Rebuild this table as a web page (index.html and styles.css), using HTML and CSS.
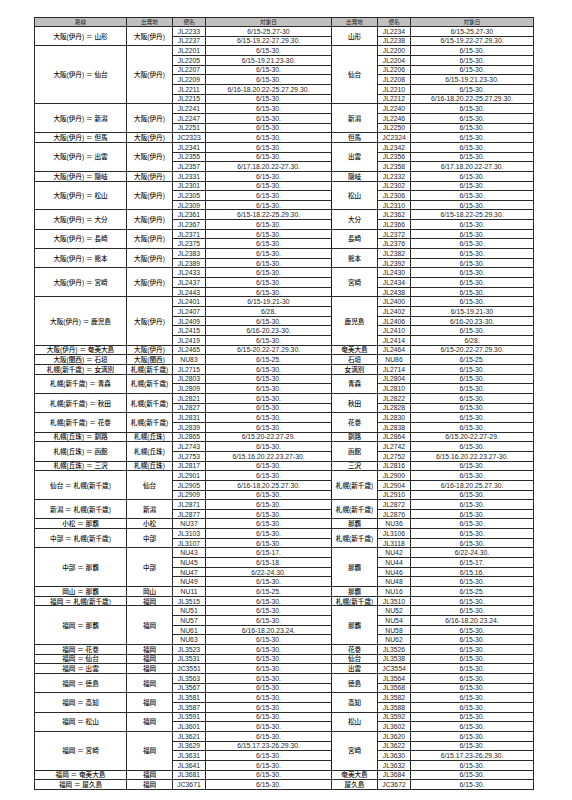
FILE: index.html
```html
<!DOCTYPE html>
<html lang="ja">
<head>
<meta charset="utf-8">
<link rel="stylesheet" href="styles.css">
</head>
<body>
<table class="sched">
<colgroup>
<col class="c-route"><col class="c-dep"><col class="c-fl"><col class="c-days">
<col class="c-dep"><col class="c-fl"><col class="c-days2">
</colgroup>
<thead>
<tr class="head"><th>路線</th><th>出発地</th><th>便名</th><th>対象日</th><th class="split">出発地</th><th>便名</th><th>対象日</th></tr>
</thead>
<tbody>
<tr><td class="jp" rowspan="2">大阪(伊丹) ＝ 山形</td><td class="jp" rowspan="2">大阪(伊丹)</td><td>JL2233</td><td>6/15-25.27-30</td><td class="jp split" rowspan="2">山形</td><td>JL2234</td><td>6/15-25.27-30</td></tr>
<tr><td>JL2237</td><td>6/15-19.22-27.29.30.</td><td>JL2238</td><td>6/15-19.22-27.29.30.</td></tr>
<tr><td class="jp" rowspan="6">大阪(伊丹) ＝ 仙台</td><td class="jp" rowspan="6">大阪(伊丹)</td><td>JL2201</td><td>6/15-30.</td><td class="jp split" rowspan="6">仙台</td><td>JL2200</td><td>6/15-30.</td></tr>
<tr><td>JL2205</td><td>6/15-19.21.23-30.</td><td>JL2204</td><td>6/15-30.</td></tr>
<tr><td>JL2207</td><td>6/15-30.</td><td>JL2206</td><td>6/15-30.</td></tr>
<tr><td>JL2209</td><td>6/15-30.</td><td>JL2208</td><td>6/15-19.21.23-30.</td></tr>
<tr><td>JL2211</td><td>6/16-18.20.22-25.27.29.30.</td><td>JL2210</td><td>6/15-30.</td></tr>
<tr><td>JL2215</td><td>6/15-30.</td><td>JL2212</td><td>6/16-18.20.22-25.27.29.30.</td></tr>
<tr><td class="jp" rowspan="3">大阪(伊丹) ＝ 新潟</td><td class="jp" rowspan="3">大阪(伊丹)</td><td>JL2241</td><td>6/15-30.</td><td class="jp split" rowspan="3">新潟</td><td>JL2240</td><td>6/15-30.</td></tr>
<tr><td>JL2247</td><td>6/15-30.</td><td>JL2246</td><td>6/15-30.</td></tr>
<tr><td>JL2251</td><td>6/15-30.</td><td>JL2250</td><td>6/15-30.</td></tr>
<tr><td class="jp">大阪(伊丹) ＝ 但馬</td><td class="jp">大阪(伊丹)</td><td>JC2323</td><td>6/15-30.</td><td class="jp split">但馬</td><td>JC2324</td><td>6/15-30.</td></tr>
<tr><td class="jp" rowspan="3">大阪(伊丹) ＝ 出雲</td><td class="jp" rowspan="3">大阪(伊丹)</td><td>JL2341</td><td>6/15-30.</td><td class="jp split" rowspan="3">出雲</td><td>JL2342</td><td>6/15-30.</td></tr>
<tr><td>JL2355</td><td>6/15-30.</td><td>JL2356</td><td>6/15-30.</td></tr>
<tr><td>JL2357</td><td>6/17.18.20.22-27.30.</td><td>JL2358</td><td>6/17.18.20.22-27.30.</td></tr>
<tr><td class="jp">大阪(伊丹) ＝ 隠岐</td><td class="jp">大阪(伊丹)</td><td>JL2331</td><td>6/15-30.</td><td class="jp split">隠岐</td><td>JL2332</td><td>6/15-30.</td></tr>
<tr><td class="jp" rowspan="3">大阪(伊丹) ＝ 松山</td><td class="jp" rowspan="3">大阪(伊丹)</td><td>JL2301</td><td>6/15-30.</td><td class="jp split" rowspan="3">松山</td><td>JL2302</td><td>6/15-30.</td></tr>
<tr><td>JL2305</td><td>6/15-30.</td><td>JL2306</td><td>6/15-30.</td></tr>
<tr><td>JL2309</td><td>6/15-30.</td><td>JL2310</td><td>6/15-30.</td></tr>
<tr><td class="jp" rowspan="2">大阪(伊丹) ＝ 大分</td><td class="jp" rowspan="2">大阪(伊丹)</td><td>JL2361</td><td>6/15-18.22-25.29.30.</td><td class="jp split" rowspan="2">大分</td><td>JL2362</td><td>6/15-18.22-25.29.30.</td></tr>
<tr><td>JL2367</td><td>6/15-30.</td><td>JL2366</td><td>6/15-30.</td></tr>
<tr><td class="jp" rowspan="2">大阪(伊丹) ＝ 長崎</td><td class="jp" rowspan="2">大阪(伊丹)</td><td>JL2371</td><td>6/15-30.</td><td class="jp split" rowspan="2">長崎</td><td>JL2372</td><td>6/15-30.</td></tr>
<tr><td>JL2375</td><td>6/15-30.</td><td>JL2376</td><td>6/15-30.</td></tr>
<tr><td class="jp" rowspan="2">大阪(伊丹) ＝ 熊本</td><td class="jp" rowspan="2">大阪(伊丹)</td><td>JL2383</td><td>6/15-30.</td><td class="jp split" rowspan="2">熊本</td><td>JL2382</td><td>6/15-30.</td></tr>
<tr><td>JL2389</td><td>6/15-30.</td><td>JL2392</td><td>6/15-30.</td></tr>
<tr><td class="jp" rowspan="3">大阪(伊丹) ＝ 宮崎</td><td class="jp" rowspan="3">大阪(伊丹)</td><td>JL2433</td><td>6/15-30.</td><td class="jp split" rowspan="3">宮崎</td><td>JL2430</td><td>6/15-30.</td></tr>
<tr><td>JL2437</td><td>6/15-30.</td><td>JL2434</td><td>6/15-30.</td></tr>
<tr><td>JL2443</td><td>6/15-30.</td><td>JL2438</td><td>6/15-30.</td></tr>
<tr><td class="jp" rowspan="5">大阪(伊丹) ＝ 鹿児島</td><td class="jp" rowspan="5">大阪(伊丹)</td><td>JL2401</td><td>6/15-19.21-30</td><td class="jp split" rowspan="5">鹿児島</td><td>JL2400</td><td>6/15-30.</td></tr>
<tr><td>JL2407</td><td>6/28.</td><td>JL2402</td><td>6/15-19.21-30</td></tr>
<tr><td>JL2409</td><td>6/15-30.</td><td>JL2406</td><td>6/16-20.23-30.</td></tr>
<tr><td>JL2415</td><td>6/16-20.23-30.</td><td>JL2410</td><td>6/15-30.</td></tr>
<tr><td>JL2419</td><td>6/15-30.</td><td>JL2414</td><td>6/28.</td></tr>
<tr><td class="jp">大阪(伊丹) ＝ 奄美大島</td><td class="jp">大阪(伊丹)</td><td>JL2465</td><td>6/15-20.22-27.29.30.</td><td class="jp split">奄美大島</td><td>JL2464</td><td>6/15-20.22-27.29.30.</td></tr>
<tr><td class="jp">大阪(関西) ＝ 石垣</td><td class="jp">大阪(関西)</td><td>NU83</td><td>6/15-25.</td><td class="jp split">石垣</td><td>NU86</td><td>6/15-25.</td></tr>
<tr><td class="jp">札幌(新千歳) ＝ 女満別</td><td class="jp">札幌(新千歳)</td><td>JL2715</td><td>6/15-30.</td><td class="jp split">女満別</td><td>JL2714</td><td>6/15-30.</td></tr>
<tr><td class="jp" rowspan="2">札幌(新千歳) ＝ 青森</td><td class="jp" rowspan="2">札幌(新千歳)</td><td>JL2803</td><td>6/15-30.</td><td class="jp split" rowspan="2">青森</td><td>JL2804</td><td>6/15-30.</td></tr>
<tr><td>JL2809</td><td>6/15-30.</td><td>JL2810</td><td>6/15-30.</td></tr>
<tr><td class="jp" rowspan="2">札幌(新千歳) ＝ 秋田</td><td class="jp" rowspan="2">札幌(新千歳)</td><td>JL2821</td><td>6/15-30.</td><td class="jp split" rowspan="2">秋田</td><td>JL2822</td><td>6/15-30.</td></tr>
<tr><td>JL2827</td><td>6/15-30.</td><td>JL2828</td><td>6/15-30.</td></tr>
<tr><td class="jp" rowspan="2">札幌(新千歳) ＝ 花巻</td><td class="jp" rowspan="2">札幌(新千歳)</td><td>JL2831</td><td>6/15-30.</td><td class="jp split" rowspan="2">花巻</td><td>JL2830</td><td>6/15-30.</td></tr>
<tr><td>JL2839</td><td>6/15-30.</td><td>JL2838</td><td>6/15-30.</td></tr>
<tr><td class="jp">札幌(丘珠) ＝ 釧路</td><td class="jp">札幌(丘珠)</td><td>JL2865</td><td>6/15.20-22.27-29.</td><td class="jp split">釧路</td><td>JL2864</td><td>6/15.20-22.27-29.</td></tr>
<tr><td class="jp" rowspan="2">札幌(丘珠) ＝ 函館</td><td class="jp" rowspan="2">札幌(丘珠)</td><td>JL2743</td><td>6/15-30.</td><td class="jp split" rowspan="2">函館</td><td>JL2742</td><td>6/15-30.</td></tr>
<tr><td>JL2753</td><td>6/15.16.20.22.23.27-30.</td><td>JL2752</td><td>6/15.16.20.22.23.27-30.</td></tr>
<tr><td class="jp">札幌(丘珠) ＝ 三沢</td><td class="jp">札幌(丘珠)</td><td>JL2817</td><td>6/15-30.</td><td class="jp split">三沢</td><td>JL2816</td><td>6/15-30.</td></tr>
<tr><td class="jp" rowspan="3">仙台 ＝ 札幌(新千歳)</td><td class="jp" rowspan="3">仙台</td><td>JL2901</td><td>6/15-30.</td><td class="jp split" rowspan="3">札幌(新千歳)</td><td>JL2900</td><td>6/15-30.</td></tr>
<tr><td>JL2905</td><td>6/16-18.20.25.27.30.</td><td>JL2904</td><td>6/16-18.20.25.27.30.</td></tr>
<tr><td>JL2909</td><td>6/15-30.</td><td>JL2910</td><td>6/15-30.</td></tr>
<tr><td class="jp" rowspan="2">新潟 ＝ 札幌(新千歳)</td><td class="jp" rowspan="2">新潟</td><td>JL2871</td><td>6/15-30.</td><td class="jp split" rowspan="2">札幌(新千歳)</td><td>JL2872</td><td>6/15-30.</td></tr>
<tr><td>JL2877</td><td>6/15-30.</td><td>JL2876</td><td>6/15-30.</td></tr>
<tr><td class="jp">小松 ＝ 那覇</td><td class="jp">小松</td><td>NU37</td><td>6/15-30.</td><td class="jp split">那覇</td><td>NU36</td><td>6/15-30.</td></tr>
<tr><td class="jp" rowspan="2">中部 ＝ 札幌(新千歳)</td><td class="jp" rowspan="2">中部</td><td>JL3103</td><td>6/15-30.</td><td class="jp split" rowspan="2">札幌(新千歳)</td><td>JL3106</td><td>6/15-30.</td></tr>
<tr><td>JL3107</td><td>6/15-30.</td><td>JL3118</td><td>6/15-30.</td></tr>
<tr><td class="jp" rowspan="4">中部 ＝ 那覇</td><td class="jp" rowspan="4">中部</td><td>NU43</td><td>6/15-17.</td><td class="jp split" rowspan="4">那覇</td><td>NU42</td><td>6/22-24.30.</td></tr>
<tr><td>NU45</td><td>6/15-18.</td><td>NU44</td><td>6/15-17.</td></tr>
<tr><td>NU47</td><td>6/22-24.30.</td><td>NU46</td><td>6/15.16.</td></tr>
<tr><td>NU49</td><td>6/15-30.</td><td>NU48</td><td>6/15-30.</td></tr>
<tr><td class="jp">岡山 ＝ 那覇</td><td class="jp">岡山</td><td>NU11</td><td>6/15-25.</td><td class="jp split">那覇</td><td>NU16</td><td>6/15-25.</td></tr>
<tr><td class="jp">福岡 ＝ 札幌(新千歳)</td><td class="jp">福岡</td><td>JL3515</td><td>6/15-30.</td><td class="jp split">札幌(新千歳)</td><td>JL3510</td><td>6/15-30.</td></tr>
<tr><td class="jp" rowspan="4">福岡 ＝ 那覇</td><td class="jp" rowspan="4">福岡</td><td>NU51</td><td>6/15-30.</td><td class="jp split" rowspan="4">那覇</td><td>NU52</td><td>6/15-30.</td></tr>
<tr><td>NU57</td><td>6/15-30.</td><td>NU54</td><td>6/16-18.20.23.24.</td></tr>
<tr><td>NU61</td><td>6/16-18.20.23.24.</td><td>NU58</td><td>6/15-30.</td></tr>
<tr><td>NU63</td><td>6/15-30.</td><td>NU62</td><td>6/15-30.</td></tr>
<tr><td class="jp">福岡 ＝ 花巻</td><td class="jp">福岡</td><td>JL3523</td><td>6/15-30.</td><td class="jp split">花巻</td><td>JL3526</td><td>6/15-30.</td></tr>
<tr><td class="jp">福岡 ＝ 仙台</td><td class="jp">福岡</td><td>JL3531</td><td>6/15-30.</td><td class="jp split">仙台</td><td>JL3538</td><td>6/15-30.</td></tr>
<tr><td class="jp">福岡 ＝ 出雲</td><td class="jp">福岡</td><td>JC3551</td><td>6/15-30.</td><td class="jp split">出雲</td><td>JC3554</td><td>6/15-30.</td></tr>
<tr><td class="jp" rowspan="2">福岡 ＝ 徳島</td><td class="jp" rowspan="2">福岡</td><td>JL3563</td><td>6/15-30.</td><td class="jp split" rowspan="2">徳島</td><td>JL3564</td><td>6/15-30.</td></tr>
<tr><td>JL3567</td><td>6/15-30.</td><td>JL3568</td><td>6/15-30.</td></tr>
<tr><td class="jp" rowspan="2">福岡 ＝ 高知</td><td class="jp" rowspan="2">福岡</td><td>JL3581</td><td>6/15-30.</td><td class="jp split" rowspan="2">高知</td><td>JL3582</td><td>6/15-30.</td></tr>
<tr><td>JL3587</td><td>6/15-30.</td><td>JL3588</td><td>6/15-30.</td></tr>
<tr><td class="jp" rowspan="2">福岡 ＝ 松山</td><td class="jp" rowspan="2">福岡</td><td>JL3591</td><td>6/15-30.</td><td class="jp split" rowspan="2">松山</td><td>JL3592</td><td>6/15-30.</td></tr>
<tr><td>JL3601</td><td>6/15-30.</td><td>JL3602</td><td>6/15-30.</td></tr>
<tr><td class="jp" rowspan="4">福岡 ＝ 宮崎</td><td class="jp" rowspan="4">福岡</td><td>JL3621</td><td>6/15-30.</td><td class="jp split" rowspan="4">宮崎</td><td>JL3620</td><td>6/15-30.</td></tr>
<tr><td>JL3629</td><td>6/15.17.23-26.29.30.</td><td>JL3622</td><td>6/15-30.</td></tr>
<tr><td>JL3631</td><td>6/15-30.</td><td>JL3630</td><td>6/15.17.23-26.29.30.</td></tr>
<tr><td>JL3641</td><td>6/15-30.</td><td>JL3632</td><td>6/15-30.</td></tr>
<tr><td class="jp">福岡 ＝ 奄美大島</td><td class="jp">福岡</td><td>JL3681</td><td>6/15-30.</td><td class="jp split">奄美大島</td><td>JL3684</td><td>6/15-30.</td></tr>
<tr><td class="jp">福岡 ＝ 屋久島</td><td class="jp">福岡</td><td>JC3671</td><td>6/15-30.</td><td class="jp split">屋久島</td><td>JC3672</td><td>6/15-30.</td></tr>
</tbody>
</table>
</body>
</html>
```

FILE: styles.css
```css
html, body {
  margin: 0;
  padding: 0;
  background: #ffffff;
}

body {
  padding: 17px 0 0 34px;
  font-family: "Liberation Sans", "Noto Sans CJK JP", sans-serif;
}

.sched {
  border-collapse: collapse;
  table-layout: fixed;
  width: 500px;
  border: 1.5px solid #111;
  color: #262626;
}

.c-route { width: 92px; }
.c-dep { width: 46px; }
.c-fl { width: 33px; }
.c-days { width: 126px; }
.c-days2 { width: 123px; }

.sched th,
.sched td {
  padding: 0;
  border: 1px solid #2a2a2a;
  text-align: center;
  vertical-align: middle;
  white-space: nowrap;
  overflow: hidden;
  font-weight: normal;
}

.sched th {
  height: 8px;
  background: #c0c0c0;
  font-family: "Noto Sans CJK JP", sans-serif;
  font-size: 5.6px;
  line-height: 7px;
  color: #222;
}

.sched td {
  height: 8.67px;
  font-size: 6.8px;
  line-height: 7px;
}

.sched td.jp {
  font-family: "Liberation Sans", "Noto Sans CJK JP", sans-serif;
  font-size: 6.6px;
  font-weight: 500;
  color: #111;
}

.sched .split {
  border-left: 1.5px solid #111;
}
```
